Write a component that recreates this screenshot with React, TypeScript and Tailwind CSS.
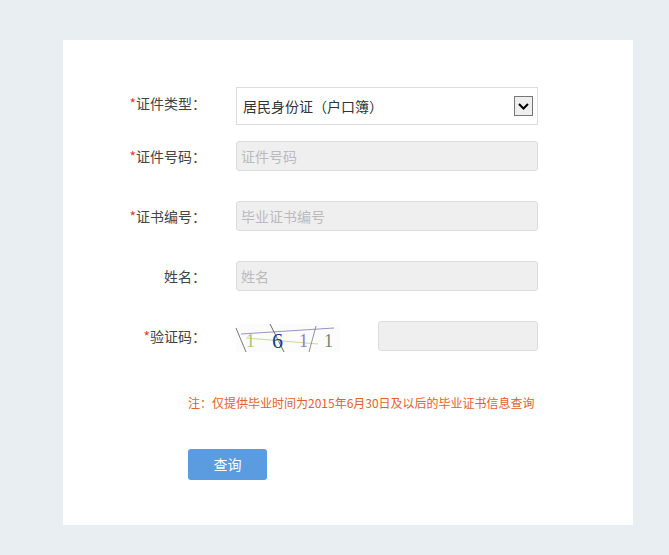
export default function App() {
  const font = { fontFamily: '"Noto Sans CJK SC", "Noto Sans", sans-serif' };
  const label = "w-[143px] shrink-0 text-right text-[14px] text-[#444]";
  const input = "h-[30px] w-[302px] rounded-[3px] border border-[#dcdcdc] bg-[#efefef] px-[4px] text-[14px] text-[#bbb] flex items-center";
  return (
    <div className="min-h-[555px] bg-[#e9eef2] pt-[40px] pl-[63px]" style={font}>
      <div className="h-[485px] w-[570px] bg-white pt-[47px]">
        <div className="flex h-[38px] items-center">
          <div className={label + " -mt-[6px]"}><span className="text-[#e4393c]">*</span>证件类型：</div>
          <div className="ml-[30px] flex h-[38px] w-[302px] items-center justify-between border border-[#dcdcdc] bg-white pl-[6px] pr-[4px] text-[14px] text-[#333]">
            <span>居民身份证（户口簿）</span>
            <div className="flex h-[20px] w-[19px] items-center justify-center border border-[#777] bg-[#eee]">
              <svg width="11" height="7" viewBox="0 0 11 7"><path d="M1 1l4.5 4.5L10 1" stroke="#000" strokeWidth="2" fill="none" /></svg>
            </div>
          </div>
        </div>
        {[["*", "证件号码：", "证件号码"], ["*", "证书编号：", "毕业证书编号"], ["", "姓名：", "姓名"]].map(([s, l, p], i) => (
          <div key={i} className={"flex items-center " + (i === 0 ? "mt-[16px]" : "mt-[30px]")}>
            <div className={label}><span className="text-[#e4393c]">{s}</span>{l}</div>
            <div className={"ml-[30px] " + input}>{p}</div>
          </div>
        ))}
        <div className="mt-[30px] flex h-[30px] items-center">
          <div className={label}><span className="text-[#e4393c]">*</span>验证码：</div>
          <div className="ml-[30px] mt-[4px] h-[28px] w-[104px] bg-[#fcfcfc]">
            <svg width="104" height="28" viewBox="0 0 104 28" overflow="visible">
              <line x1="0" y1="4" x2="10" y2="28" stroke="#555" strokeWidth="0.8" />
              <line x1="5" y1="10" x2="98" y2="4" stroke="#9a93c8" strokeWidth="1" />
              <line x1="34" y1="0" x2="48" y2="28" stroke="#444" strokeWidth="0.8" />
              <line x1="10" y1="14" x2="82" y2="20" stroke="#c8d89a" strokeWidth="1" />
              <line x1="80" y1="2" x2="73" y2="28" stroke="#777" strokeWidth="0.8" />
              <text x="10" y="23" fontSize="18" fill="#b8c070" fontFamily="Liberation Serif">1</text>
              <text x="36" y="24" fontSize="22" fill="#1a3f8a" fontFamily="Liberation Serif">6</text>
              <text x="63" y="23" fontSize="18" fill="#8a7fc0" fontFamily="Liberation Serif">1</text>
              <text x="88" y="23" fontSize="18" fill="#6b8c6b" fontFamily="Liberation Serif">1</text>
            </svg>
          </div>
          <div className="ml-[38px] h-[30px] w-[160px] rounded-[3px] border border-[#dcdcdc] bg-[#efefef]" />
        </div>
        <div className="mt-[43px] pl-[125px] text-[12px] text-[#e4602a]">注：仅提供毕业时间为2015年6月30日及以后的毕业证书信息查询</div>
        <div className="mt-[37px] pl-[125px]">
          <button className="h-[31px] w-[79px] rounded-[3px] bg-[#5b9be0] text-[14px] text-white">查询</button>
        </div>
      </div>
    </div>
  );
}
